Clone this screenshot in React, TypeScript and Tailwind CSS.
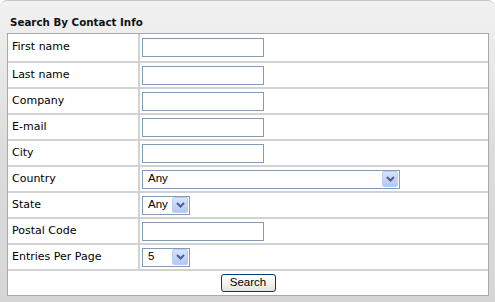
import { ReactNode } from "react";

const font = { fontFamily: '"DejaVu Sans", Verdana, sans-serif' };
const arial = { fontFamily: '"Liberation Sans", Arial, sans-serif' };

const ArrowBox = () => (
  <span className="flex h-[16px] w-[16px] shrink-0 items-center justify-center rounded-[2px] border border-[#b9cdf8] bg-gradient-to-b from-[#d6e3fe] to-[#b4c7f6]">
    <svg width="9" height="6" viewBox="0 0 9 6">
      <path d="M1 1 L4.5 4.5 L8 1" fill="none" stroke="#4d6185" strokeWidth="2" />
    </svg>
  </span>
);

const TextBox = () => (
  <div className="h-[19px] w-[122px] border border-[#7f9db9] bg-white" />
);

const Select = ({ value, width }: { value: string; width: string }) => (
  <div
    className={`flex h-[19px] items-center justify-between border border-[#7f9db9] bg-white pl-[5px] pr-[1px] ${width}`}
  >
    <span className="text-[11.5px] text-black" style={arial}>
      {value}
    </span>
    <ArrowBox />
  </div>
);

const Row = ({
  label,
  children,
  height = "h-[26px]",
}: {
  label: string;
  children: ReactNode;
  height?: string;
}) => (
  <div className={`flex border-b-2 border-[#d2d2d2] ${height}`}>
    <div className="flex w-[132px] items-center border-r-2 border-[#d2d2d2] pl-[4px] text-[11px] text-black">
      {label}
    </div>
    <div className="flex flex-1 items-center pl-[2px]">{children}</div>
  </div>
);

export default function App() {
  return (
    <div className="h-[302px] w-[495px] overflow-hidden bg-white" style={font}>
      <div className="h-[302px] w-[495px] rounded-t-[7px] border-t border-[#c8c8c8] bg-gradient-to-b from-[#f2f2f2] via-[#dcdcdc] to-[#d6d6d6]">
        <div className="flex h-[32px] items-end pb-[3px] pl-[10px] text-[10.3px] font-bold text-[#111]">
          Search By Contact Info
        </div>
        <div className="ml-[7px] w-[482px] border border-[#a9a9a9] bg-white">
          <Row label="First name" height="h-[29px]">
            <TextBox />
          </Row>
          <Row label="Last name">
            <TextBox />
          </Row>
          <Row label="Company">
            <TextBox />
          </Row>
          <Row label="E-mail">
            <TextBox />
          </Row>
          <Row label="City">
            <TextBox />
          </Row>
          <Row label="Country">
            <Select value="Any" width="w-[258px]" />
          </Row>
          <Row label="State">
            <Select value="Any" width="w-[48px]" />
          </Row>
          <Row label="Postal Code">
            <TextBox />
          </Row>
          <Row label="Entries Per Page">
            <Select value="5" width="w-[48px]" />
          </Row>
          <div className="flex h-[24px] items-center justify-center">
            <button
              className="h-[18px] w-[55px] rounded-[3px] border border-[#003c74] bg-gradient-to-b from-white to-[#e6e6e0] text-[11.5px] leading-none text-black"
              style={arial}
            >
              Search
            </button>
          </div>
        </div>
      </div>
    </div>
  );
}
